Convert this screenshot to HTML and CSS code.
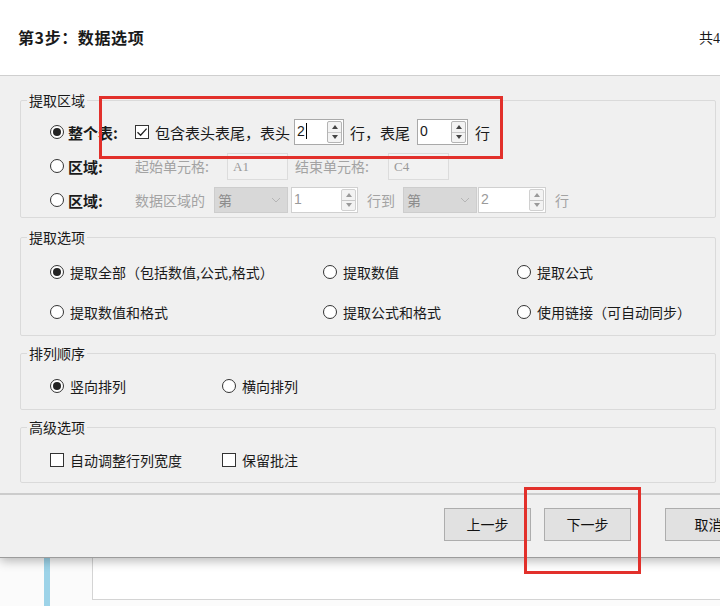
FILE: index.html
```html
<!DOCTYPE html>
<html lang="zh-CN">
<head>
<meta charset="UTF-8" />
<title>数据选项</title>
<link rel="stylesheet" href="styles.css">
</head>
<body>
<div class="page">

  <div class="dialog">
    <!-- header -->
    <div class="head">
      <h1 class="step-title">第3步：数据选项</h1>
      <span class="step-count">共4</span>
    </div>

    <div class="content">
      <!-- 提取区域 -->
      <fieldset class="group g-area">
        <legend>提取区域</legend>
        <div class="row r-area">
          <span class="radio on"></span>
          <span class="opt-label">整个表:</span>
          <span class="check on"><svg viewBox="0 0 14 14" width="14" height="14"><path d="M2.5 7.2 L5.6 10.2 L11.6 3.6" fill="none" stroke="#222" stroke-width="1.3"/></svg></span>
          <span class="t15 ml6">包含表头表尾，表头</span>
          <span class="spin w50 ml4"><span class="val">2<i class="caret"></i></span><span class="arrows"><i class="up"></i><i class="dn"></i></span></span>
          <span class="t15 ml6">行，表尾</span>
          <span class="spin w51 ml7"><span class="val">0</span><span class="arrows"><i class="up"></i><i class="dn"></i></span></span>
          <span class="t15 ml7">行</span>
        </div>
        <div class="row r-area">
          <span class="radio"></span>
          <span class="opt-label">区域:</span>
          <span class="dim w92">起始单元格:</span>
          <span class="cell">A1</span>
          <span class="dim w93 ml7">结束单元格:</span>
          <span class="cell">C4</span>
        </div>
        <div class="row r-area">
          <span class="radio"></span>
          <span class="opt-label">区域:</span>
          <span class="dim w79">数据区域的</span>
          <span class="combo">第<svg class="chev" viewBox="0 0 10 6" width="10" height="6"><path d="M1 1 L5 5 L9 1" fill="none" stroke="#b5b5b5" stroke-width="1"/></svg></span>
          <span class="spin off w67 ml3"><span class="val">1</span><span class="arrows"><i class="up"></i><i class="dn"></i></span></span>
          <span class="dim ml9">行到</span>
          <span class="combo ml8">第<svg class="chev" viewBox="0 0 10 6" width="10" height="6"><path d="M1 1 L5 5 L9 1" fill="none" stroke="#b5b5b5" stroke-width="1"/></svg></span>
          <span class="spin off w68 ml1"><span class="val">2</span><span class="arrows"><i class="up"></i><i class="dn"></i></span></span>
          <span class="dim ml9">行</span>
        </div>
      </fieldset>

      <!-- 提取选项 -->
      <fieldset class="group g-opts">
        <legend>提取选项</legend>
        <div class="grid3">
          <label class="item"><span class="radio on"></span>提取全部（包括数值,公式,格式）</label>
          <label class="item"><span class="radio"></span>提取数值</label>
          <label class="item"><span class="radio"></span>提取公式</label>
          <label class="item"><span class="radio"></span>提取数值和格式</label>
          <label class="item"><span class="radio"></span>提取公式和格式</label>
          <label class="item"><span class="radio"></span>使用链接（可自动同步）</label>
        </div>
      </fieldset>

      <!-- 排列顺序 -->
      <fieldset class="group g-small">
        <legend>排列顺序</legend>
        <div class="grid2">
          <label class="item"><span class="radio on"></span>竖向排列</label>
          <label class="item"><span class="radio"></span>横向排列</label>
        </div>
      </fieldset>

      <!-- 高级选项 -->
      <fieldset class="group g-small g-last">
        <legend>高级选项</legend>
        <div class="grid2">
          <label class="item"><span class="check"></span>自动调整行列宽度</label>
          <label class="item"><span class="check"></span>保留批注</label>
        </div>
      </fieldset>
    </div>

    <!-- footer buttons -->
    <div class="foot">
      <button class="btn">上一步</button>
      <button class="btn ml13">下一步</button>
      <button class="btn ml34">取消</button>
    </div>
  </div>

  <!-- window behind the dialog -->
  <div class="behind">
    <div class="blue-bar"></div>
    <div class="sheet-box"></div>
  </div>

  <!-- red annotation frames -->
  <div class="mark mark-top"></div>
  <div class="mark mark-next"></div>
</div>
</body>
</html>
```

FILE: styles.css
```css
:root{
  --bg:      #f0f0f0;
  --line:    #dadada;
  --txt:     #1a1a1a;
  --dim:     #a3a3a3;
  --red:     #e2302b;
  font-family: "Noto Sans CJK SC", "Noto Sans", sans-serif;
}

*{box-sizing:border-box;margin:0;padding:0}

body{
  width:720px;height:606px;
  overflow:hidden;
  background:#fbfbfb;
  color:var(--txt);
  font-size:14px;
}

.page{position:relative;width:720px;height:606px;overflow:hidden}

/* dialog */
.dialog{
  width:770px;
  background:var(--bg);
  border-bottom:1px solid #9c9c9c;
  box-shadow:0 3px 10px rgba(0,0,0,.28);
  position:relative;
  z-index:1;
}

.head{
  height:76px;
  background:#fff;
  border-bottom:1px solid #cfcfcf;
  display:flex;align-items:center;
  padding:0 50px 2px 18px;
}
.step-title{font-size:16px;font-weight:700;letter-spacing:.6px}
.step-count{margin-left:auto;font-size:14px;font-family:"Liberation Serif","Noto Sans CJK SC",serif}

.content{padding:14px 54px 10px 20px}

/* group boxes */
.group{
  border:1px solid var(--line);
  border-radius:2px;
  padding:0;
}
.group legend{
  margin-left:6px;
  padding:0 2px;
  height:20px;line-height:20px;
  font-size:14px;
}
.g-area{padding-top:5px}
.g-opts{margin-top:9px;padding-top:5px;padding-bottom:3px}
.g-small{margin-top:7px;padding-top:3px;padding-bottom:3px}
.g-last{padding-bottom:2px}

.row{display:flex;align-items:center;padding-left:29px}
.r-area{height:34px}

.opt-label{width:71px;padding-left:4px;font-size:15px;font-weight:700}

.grid3{display:grid;grid-template-columns:273px 194px 1fr;padding-left:29px}
.grid2{display:grid;grid-template-columns:172px 172px;padding-left:29px}
.item{height:40px;display:flex;align-items:center;gap:6px;white-space:nowrap}

/* radio + checkbox */
.radio{
  width:14px;height:14px;flex:none;
  border:1px solid #333;border-radius:50%;
  background:#fff;
  display:flex;align-items:center;justify-content:center;
}
.radio.on::after{content:"";width:8px;height:8px;border-radius:50%;background:#222}
.check{
  width:14px;height:14px;flex:none;
  border:1px solid #333;background:#fff;
  display:flex;align-items:center;justify-content:center;
}
.check svg{display:block;margin:-1px}

.t15{font-size:15px}
.dim{color:var(--dim)}
.w92{width:92px}
.w93{width:93px}
.w79{width:79px}

.ml1{margin-left:1px}.ml3{margin-left:3px}.ml4{margin-left:4px}.ml6{margin-left:6px}
.ml7{margin-left:7px}.ml8{margin-left:8px}.ml9{margin-left:9px}
.ml13{margin-left:13px}.ml34{margin-left:34px}

/* spin boxes */
.spin{
  height:26px;display:flex;
  background:#fff;border:1px solid #a9a9a9;
  font-family:"Liberation Sans",sans-serif;font-size:14px;
}
.w50{width:50px}.w51{width:51px}.w67{width:67px}.w68{width:68px}
.spin .val{flex:1;padding:2px 0 0 2px;line-height:18px;display:flex;align-items:flex-start}
.caret{display:inline-block;width:1px;height:16px;background:#000;margin-left:1px;margin-top:1px}
.arrows{
  width:15px;margin:1px 1px 1px 0;
  border:1px solid #b4b4b4;border-radius:2px;
  background:#f3f3f3;
  display:flex;flex-direction:column;
}
.arrows i{flex:1;display:flex;align-items:center;justify-content:center}
.arrows .up{border-bottom:1px solid #c8c8c8}
.arrows .up::after{content:"";border:3px solid transparent;border-bottom:4px solid #444;border-top:0}
.arrows .dn::after{content:"";border:3px solid transparent;border-top:4px solid #444;border-bottom:0}
.spin.off{border-color:#d0d0d0;color:#9a9a9a}
.spin.off .arrows{border-color:#d0d0d0}
.spin.off .arrows .up::after{border-bottom-color:#9a9a9a}
.spin.off .arrows .dn::after{border-top-color:#9a9a9a}

/* disabled cell refs */
.cell{
  width:61px;height:27px;
  border:1px solid #dcdcdc;background:#f2f2f2;
  color:#9a9a9a;
  font-family:"Liberation Serif",serif;font-size:13px;
  padding:5px 0 0 5px;
}

/* disabled combo */
.combo{
  width:74px;height:26px;
  background:#d8d8d8;border:1px solid #cdcdcd;
  color:#8d8d8d;font-size:14px;
  display:flex;align-items:center;
  padding-left:3px;
}
.chev{margin-left:auto;margin-right:6px}

/* footer */
.foot{
  height:64px;
  border-top:2px solid #cccccc;
  display:flex;align-items:center;justify-content:flex-end;
  padding:0 18px 4px 0;
}
.btn{
  width:87px;height:33px;
  background:#e1e1e1;border:1px solid #adadad;
  font-family:"Noto Sans CJK SC",sans-serif;font-size:14px;color:#111;
}

/* window behind */
.behind{display:flex;padding-left:44px;height:49px}
.blue-bar{width:6px;background:#9dd3e8}
.sheet-box{
  margin-left:42px;flex:1;height:42px;
  border-left:1px solid #d4d4d4;border-bottom:1px solid #d4d4d4;
  background:#fff;
}

/* red annotation frames */
.mark{position:absolute;border:3px solid var(--red);z-index:2}
.mark-top{left:99px;top:96px;width:404px;height:63px}
.mark-next{left:524px;top:487px;width:117px;height:87px}
```
